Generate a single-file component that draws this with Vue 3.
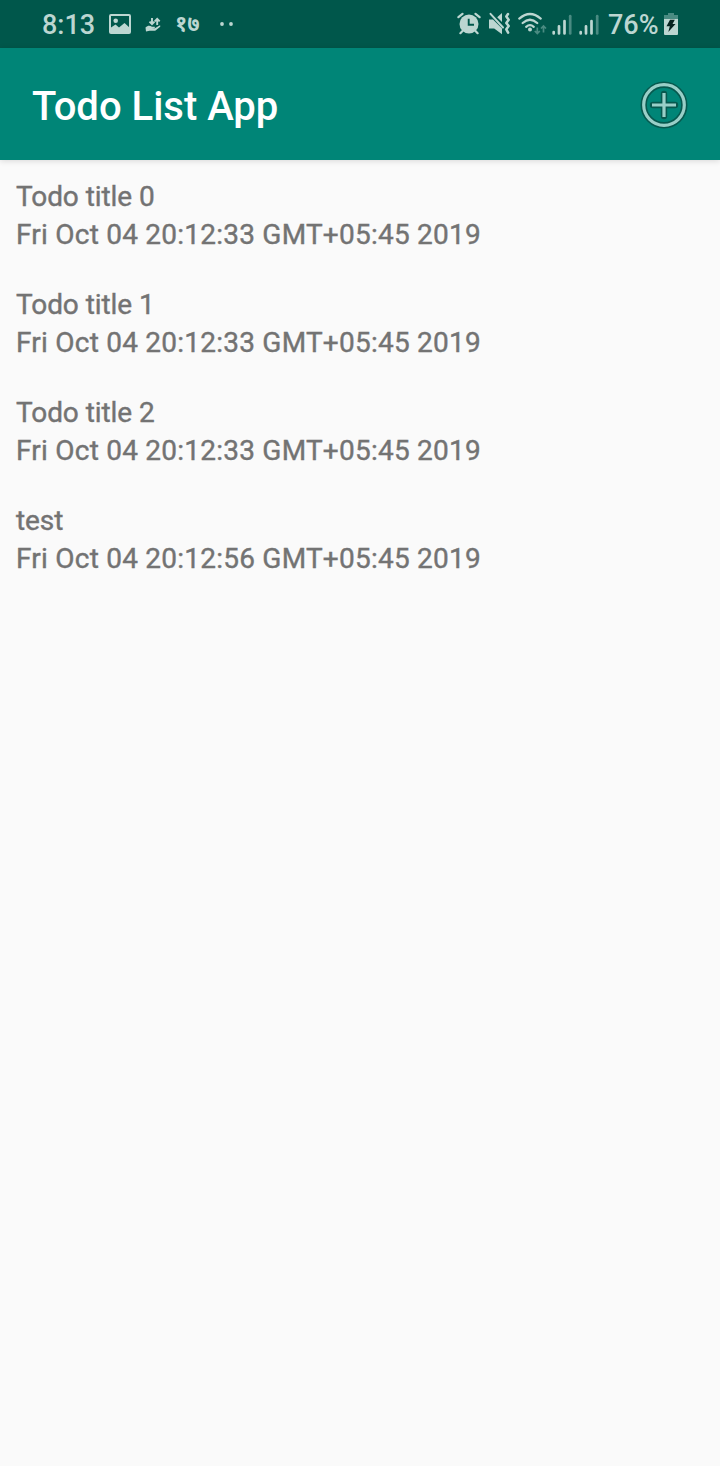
<script setup>
const todos = [
  { title: 'Todo title 0', date: 'Fri Oct 04 20:12:33 GMT+05:45 2019' },
  { title: 'Todo title 1', date: 'Fri Oct 04 20:12:33 GMT+05:45 2019' },
  { title: 'Todo title 2', date: 'Fri Oct 04 20:12:33 GMT+05:45 2019' },
  { title: 'test', date: 'Fri Oct 04 20:12:56 GMT+05:45 2019' },
]
</script>

<template>
  <div class="screen">
    <div class="status">
      <span class="clock">8:13</span>
      <svg class="picture" width="22" height="20" viewBox="0 0 22 20">
        <rect x="1" y="1" width="20" height="18" rx="1" fill="none" stroke="#bcd6d1" stroke-width="2" />
        <circle cx="6.7" cy="6.7" r="2.3" fill="#bcd6d1" />
        <path d="M2 13.5 6.5 10.5l3.5 3 5.5-4.5 5.5 5v5H2z" fill="#bcd6d1" />
      </svg>
      <svg class="hand" width="16" height="16" viewBox="0 0 16 16" fill="none" stroke="#bcd6d1">
        <path d="M7 1v6M4.5 4.6 7 7.1l2.5-2.5M12.2 8V2M9.7 4.4l2.5-2.5 2.5 2.5" stroke-width="1.9" />
        <path d="M.5 10.6C3 8 5 8.6 7 9.8h2.8v1.3H6.7l3.2.2 4.2-2.6c1.2-.5 1.7.4.8 1.3L10.2 13.8H4.5L1 14.6z" fill="#bcd6d1" stroke="none" />
      </svg>
      <span class="date-number">१७</span>
      <svg class="dots" width="14" height="4" viewBox="0 0 14 4" fill="#bcd6d1">
        <circle cx="2" cy="2" r="1.9" /><circle cx="11" cy="2" r="1.9" />
      </svg>

      <svg class="alarm" width="24" height="24" viewBox="0 0 24 24">
        <path d="M1.4 5.2 5.5 1.8M18.5 1.8l4.1 3.4M5.5 19 3.4 21.2M18.5 19l2.1 2.2" fill="none" stroke="#bcd6d1" stroke-width="2.2" stroke-linecap="round" />
        <circle cx="12" cy="12" r="9.5" fill="#bcd6d1" />
        <path d="M11.7 6.8v6h5.3" fill="none" stroke="#00574b" stroke-width="1.9" />
      </svg>
      <svg class="mute" width="23" height="24" viewBox="0 0 23 24">
        <path d="M1 7.5h4L14 16.5v5.8L6.2 16.5H1zM9.2 5.2 14 1v9z" fill="#bcd6d1" />
        <path d="M2.5 1.8 15 15.5" fill="none" stroke="#bcd6d1" stroke-width="2" stroke-linecap="round" />
        <path d="M20 2 18.3 4.5l2.4 3.2-2.4 3.2 2.4 3.2-2.4 3.2 1.8 3.4" fill="none" stroke="#bcd6d1" stroke-width="2.5" stroke-linejoin="round" stroke-linecap="round" />
      </svg>
      <svg class="wifi" width="30" height="24" viewBox="0 0 30 24" fill="none" stroke-linecap="round">
        <g stroke="#bcd6d1" stroke-width="2.3">
          <path d="M1.3 6.6Q12 -2.5 22.7 6.6M4.7 11Q12 4.5 19.2 11M8.2 14.8Q12 11.5 15.7 14.8" />
        </g>
        <circle cx="12" cy="17.6" r="2" fill="#bcd6d1" />
        <path d="M19.3 15.5v6M16.8 19l2.5 2.5 2.5-2.5M25.5 20.5V14M23 16.5l2.5-2.5 2.5 2.5" stroke="#4a8b82" stroke-width="1.7" stroke-linecap="butt" />
      </svg>
      <svg v-for="n in 2" :key="n" class="signal" width="20" height="22" viewBox="0 0 20 22" stroke="#bcd6d1" stroke-width="2.7" stroke-linecap="round">
        <path d="M1.7 18v1.4M7 12.3v7.1M12.5 7v12.4" />
        <path d="M18.2 2.2v17.2" stroke="#4a8b82" />
      </svg>
      <span class="percent">76%</span>
      <svg class="battery" width="14" height="22" viewBox="0 0 14 22">
        <path d="M4 0h6v2h4v4H0V2h4z" fill="#4a8b82" />
        <path d="M0 6h14v15q0 1-1 1H1q-1 0-1-1z" fill="#bcd6d1" />
        <path d="M6 6.8h4.8L8.5 11H11.5L4.3 19l1.5-5.7H2.5z" fill="#06231f" />
      </svg>
    </div>

    <header class="bar">
      <h1>Todo List App</h1>
      <svg class="add" width="48" height="48" viewBox="0 0 48 48" fill="none">
        <g stroke="#07594f" stroke-width="6.4" stroke-linecap="round">
          <circle cx="24" cy="24" r="20.3" /><path d="M13 24h22M24 13v22" />
        </g>
        <g stroke="#99cfc8" stroke-width="3.2">
          <circle cx="24" cy="24" r="20.3" /><path d="M12 24h24M24 12v24" />
        </g>
      </svg>
    </header>

    <main class="list">
      <div v-for="(todo, i) in todos" :key="i" class="todo">
        <div class="title">{{ todo.title }}</div>
        <div class="date">{{ todo.date }}</div>
      </div>
    </main>
  </div>
</template>

<style>
body { background: #fafafa; }
</style>

<style scoped>
.screen {
  width: 720px;
  height: 1466px;
  overflow: hidden;
  background: #fafafa;
  font-family: Roboto, "Noto Sans", sans-serif;
  font-weight: 500;
}
svg { display: block; flex: none; }
.status {
  box-sizing: border-box;
  display: flex;
  align-items: flex-start;
  height: 48px;
  padding: 0 42px 0 42px;
  background: #00574b;
  color: #bcd6d1;
}
.clock, .percent {
  font-size: 27px;
  line-height: 32px;
  padding-top: 9px;
  white-space: nowrap;
}
.clock { width: 67px; }
.picture { margin-top: 14px; }
.hand { margin: 17px 0 0 14px; }
.date-number {
  width: 28px;
  margin-left: 14px;
  padding-top: 9px;
  font-size: 22px;
  line-height: 30px;
  font-weight: 700;
}
.dots { margin: 22px 0 0 17px; }
.alarm { margin: 12px 0 0 auto; }
.mute { margin: 12px 0 0 7px; }
.wifi { margin: 12px 0 0 7px; }
.signal { margin: 14px 0 0 4px; }
.signal + .signal { margin-left: 7px; }
.percent { width: 49px; margin-left: 9px; }
.battery { margin: 13px 0 0 7px; }
.bar {
  position: relative;
  box-sizing: border-box;
  display: flex;
  align-items: center;
  justify-content: space-between;
  height: 112px;
  padding: 0 32px;
  background: #008577;
  box-shadow: 0 1px 6px rgba(0, 0, 0, .14);
}
h1 {
  margin: 6px 0 0;
  color: #fff;
  font-size: 40px;
  line-height: 48px;
  font-weight: 500;
}
.add { margin-top: 1px; }
.list { padding: 18px 16px 0; }
.todo {
  height: 76px;
  margin-bottom: 32px;
  color: #737373;
  font-size: 28px;
  font-weight: 400;
  line-height: 38px;
  white-space: nowrap;
  -webkit-text-stroke: .4px #737373;
}
.title { letter-spacing: -.08px; }
.date { letter-spacing: .23px; }
</style>
